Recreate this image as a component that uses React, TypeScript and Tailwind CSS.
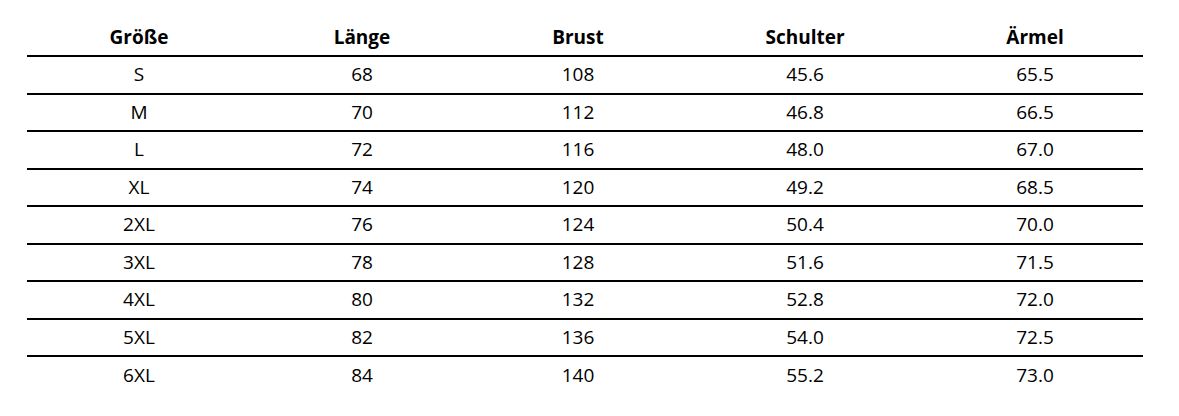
const HEADERS = ["Größe", "Länge", "Brust", "Schulter", "Ärmel"];

const ROWS = [
  ["S", "68", "108", "45.6", "65.5"],
  ["M", "70", "112", "46.8", "66.5"],
  ["L", "72", "116", "48.0", "67.0"],
  ["XL", "74", "120", "49.2", "68.5"],
  ["2XL", "76", "124", "50.4", "70.0"],
  ["3XL", "78", "128", "51.6", "71.5"],
  ["4XL", "80", "132", "52.8", "72.0"],
  ["5XL", "82", "136", "54.0", "72.5"],
  ["6XL", "84", "140", "55.2", "73.0"],
];

const rowCls = "grid grid-cols-[224px_222px_210px_244px_216px] h-[37.5px] items-center text-center";

export default function App() {
  return (
    <div
      className="w-[1179px] h-[416px] bg-white text-black pt-[19.5px] pl-[27px]"
      style={{ fontFamily: '"Open Sans", "Noto Sans", sans-serif' }}
    >
      <div className="w-[1116px] text-[19px] leading-none">
        <div className={`${rowCls} font-bold border-b-2 border-black`}>
          {HEADERS.map((h) => (
            <div key={h}>{h}</div>
          ))}
        </div>
        {ROWS.map((r, i) => (
          <div
            key={r[0]}
            className={`${rowCls} ${i < ROWS.length - 1 ? "border-b-2 border-black" : ""}`}
          >
            {r.map((c, j) => (
              <div key={j}>{c}</div>
            ))}
          </div>
        ))}
      </div>
    </div>
  );
}
